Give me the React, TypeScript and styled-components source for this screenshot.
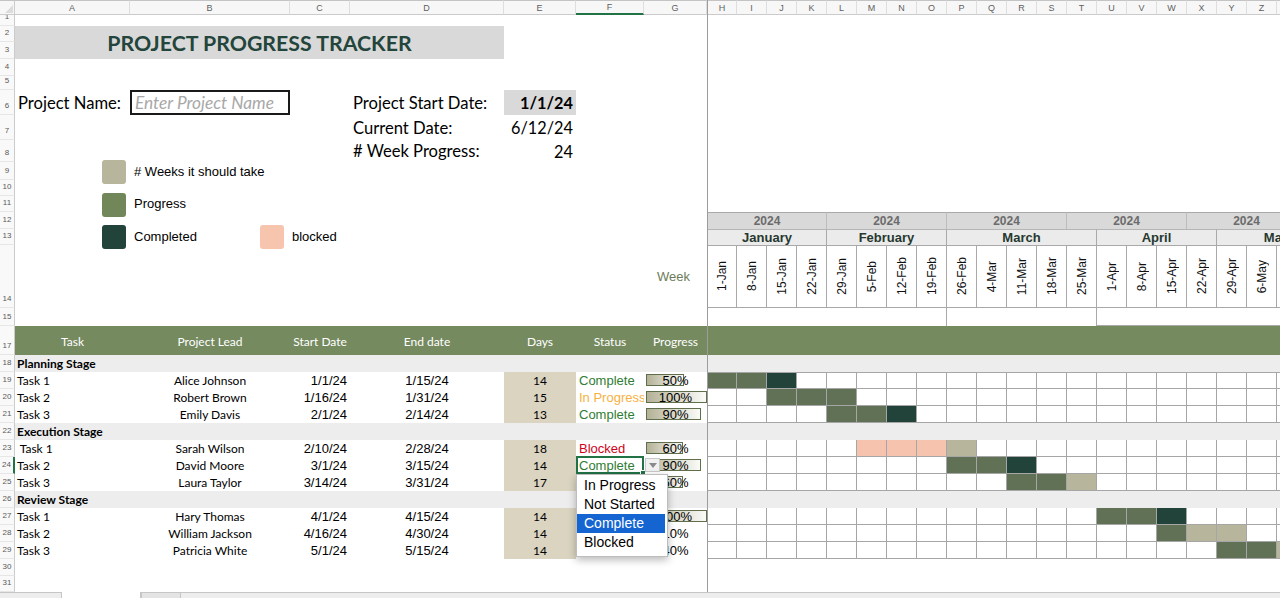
import React from "react";
import styled, { createGlobalStyle, css } from "styled-components";

const GlobalStyle = createGlobalStyle`
  html, body { margin: 0; padding: 0; background: #ffffff; }
  body { width: 1280px; height: 598px; overflow: hidden; }
  #root { width: 1280px; height: 598px; overflow: hidden; }
`;

const CALIBRI = `Lato, Carlito, "Open Sans", sans-serif`;
const ARIAL = `"Liberation Sans", Arial, Helvetica, sans-serif`;

const COL_WIDTHS = [15, 115, 160, 60, 154, 72, 68, 63, 1, 29, ...Array(20).fill(30)];
const ROW_HEIGHTS: number[] = [
  11, 16, 17, 17, 14, 25, 25, 22, 18, 16, 16, 17, 16, 63, 18, 0, 29, 17,
  ...Array(11).fill(17),
  17, 16,
];

const COL = { RH: 1, A: 2, B: 3, C: 4, D: 5, E: 6, F: 7, G: 8, FZ: 9, H: 10 };
const WIDE = COL_WIDTHS.length - 1;

const letters = [
  "A", "B", "C", "D", "E", "F", "G", "",
  "H", "I", "J", "K", "L", "M", "N", "O", "P", "Q", "R", "S", "T", "U", "V", "W", "X", "Y", "Z",
];

const weeks = [
  "1-Jan", "8-Jan", "15-Jan", "22-Jan", "29-Jan", "5-Feb", "12-Feb", "19-Feb", "26-Feb", "4-Mar",
  "11-Mar", "18-Mar", "25-Mar", "1-Apr", "8-Apr", "15-Apr", "22-Apr", "29-Apr", "6-May", "13-May",
];

const years = [
  { c: 10, s: 4 }, { c: 14, s: 4 }, { c: 18, s: 4 }, { c: 22, s: 4 }, { c: 26, s: 4 },
];
const months = [
  { c: 10, s: 4, n: "January" },
  { c: 14, s: 4, n: "February" },
  { c: 18, s: 5, n: "March" },
  { c: 23, s: 4, n: "April" },
  { c: 27, s: 4, n: "May" },
];
const spacers = [
  { c: 10, s: 8, b: false },
  { c: 18, s: 5, b: false },
  { c: 23, s: 8, b: true },
];

type Status = "Complete" | "In Progress" | "Blocked" | "Not Started";
type Fill = "g" | "d" | "p" | "b";

interface Task {
  row: number;
  task: string;
  lead: string;
  start: string;
  end: string;
  days: number;
  status: Status;
  pct: number;
  bar: number;
  gantt: Record<number, Fill>;
}

const stages: { name: string; row: number; tasks: Task[] }[] = [
  {
    name: "Planning Stage",
    row: 18,
    tasks: [
      { row: 19, task: "Task 1", lead: "Alice Johnson", start: "1/1/24", end: "1/15/24", days: 14, status: "Complete", pct: 50, bar: 38, gantt: { 0: "g", 1: "g", 2: "d" } },
      { row: 20, task: "Task 2", lead: "Robert Brown", start: "1/16/24", end: "1/31/24", days: 15, status: "In Progress", pct: 100, bar: 61, gantt: { 2: "g", 3: "g", 4: "g" } },
      { row: 21, task: "Task 3", lead: "Emily Davis", start: "2/1/24", end: "2/14/24", days: 13, status: "Complete", pct: 90, bar: 55, gantt: { 4: "g", 5: "g", 6: "d" } },
    ],
  },
  {
    name: "Execution Stage",
    row: 22,
    tasks: [
      { row: 23, task: " Task 1", lead: "Sarah Wilson", start: "2/10/24", end: "2/28/24", days: 18, status: "Blocked", pct: 60, bar: 37, gantt: { 5: "b", 6: "b", 7: "b", 8: "p" } },
      { row: 24, task: "Task 2", lead: "David Moore", start: "3/1/24", end: "3/15/24", days: 14, status: "Complete", pct: 90, bar: 55, gantt: { 8: "g", 9: "g", 10: "d" } },
      { row: 25, task: "Task 3", lead: "Laura Taylor", start: "3/14/24", end: "3/31/24", days: 17, status: "In Progress", pct: 60, bar: 37, gantt: { 10: "g", 11: "g", 12: "p" } },
    ],
  },
  {
    name: "Review Stage",
    row: 26,
    tasks: [
      { row: 27, task: "Task 1", lead: "Hary Thomas", start: "4/1/24", end: "4/15/24", days: 14, status: "Complete", pct: 100, bar: 61, gantt: { 13: "g", 14: "g", 15: "d" } },
      { row: 28, task: "Task 2", lead: "William Jackson", start: "4/16/24", end: "4/30/24", days: 14, status: "In Progress", pct: 10, bar: 18, gantt: { 15: "g", 16: "p", 17: "p" } },
      { row: 29, task: "Task 3", lead: "Patricia White", start: "5/1/24", end: "5/15/24", days: 14, status: "Not Started", pct: 40, bar: 20, gantt: { 17: "g", 18: "g", 19: "p" } },
    ],
  },
];

const FILL: Record<Fill, string> = {
  g: "#617155",
  d: "#22433a",
  p: "#b7b59b",
  b: "#f6c4ae",
};

const STATUS_COLOR: Record<Status, string> = {
  Complete: "#2f7d33",
  "In Progress": "#f7b13f",
  Blocked: "#d0021b",
  "Not Started": "#000000",
};

const options: Status[] = ["In Progress", "Not Started", "Complete", "Blocked"];

type Pos = { $r: number; $c: number; $rs?: number; $cs?: number };

const place = css<Pos>`
  grid-row: ${(p) => p.$r + 1} / span ${(p) => p.$rs ?? 1};
  grid-column: ${(p) => p.$c} / span ${(p) => p.$cs ?? 1};
  min-width: 0;
  min-height: 0;
  box-sizing: border-box;
`;

const Sheet = styled.div`
  display: grid;
  grid-template-columns: ${COL_WIDTHS.map((w) => `${w}px`).join(" ")};
  grid-template-rows: 15px ${ROW_HEIGHTS.map((h) => `${h}px`).join(" ")} 6px;
  width: max-content;
  background: #ffffff;
`;

const Corner = styled.div<Pos>`
  ${place}
  position: relative;
  background: #f7f7f7;
  border-top: 1px solid #c4c4c4;
  border-bottom: 1px solid #cbcbcb;
  border-right: 1px solid #cbcbcb;
  &::after {
    content: "";
    position: absolute;
    right: 1px;
    bottom: 1px;
    border-left: 8px solid transparent;
    border-bottom: 8px solid #dcdcdc;
  }
`;

const ColHead = styled.div<Pos & { $active?: boolean }>`
  ${place}
  display: flex;
  align-items: center;
  justify-content: center;
  background: #f7f7f7;
  border-top: 1px solid #c4c4c4;
  border-right: 1px solid #dedede;
  border-bottom: ${(p) => (p.$active ? "2px solid #217346" : "1px solid #cbcbcb")};
  font: 9px ${ARIAL};
  color: #5f5f5f;
  overflow: hidden;
`;

const ColHeadFill = styled.div<Pos>`
  ${place}
  background: #f7f7f7;
  border-top: 1px solid #c4c4c4;
  border-bottom: 1px solid #cbcbcb;
`;

const RowHead = styled.div<Pos & { $active?: boolean }>`
  ${place}
  display: flex;
  align-items: flex-end;
  justify-content: center;
  padding-bottom: 3px;
  background: #f9f9f9;
  border-right: ${(p) => (p.$active ? "2px solid #217346" : "1px solid #cbcbcb")};
  border-bottom: 1px solid #e6e6e6;
  font: 8px/10px ${ARIAL};
  color: #5a5a5a;
`;

const TitleBand = styled.div<Pos>`
  ${place}
  display: flex;
  align-items: center;
  justify-content: center;
  background: #d9d9d9;
  font: 700 21.3px ${CALIBRI};
  color: #24453b;
  white-space: nowrap;
`;

const FieldLabel = styled.div<Pos>`
  ${place}
  display: flex;
  align-items: center;
  padding-left: 3px;
  font: 16.6px ${CALIBRI};
  color: #000;
  white-space: nowrap;
`;

const FieldValue = styled.div<Pos & { $bold?: boolean; $shaded?: boolean }>`
  ${place}
  display: flex;
  align-items: center;
  justify-content: flex-end;
  padding-right: 3px;
  background: ${(p) => (p.$shaded ? "#d9d9d9" : "transparent")};
  font: ${(p) => (p.$bold ? 700 : 400)} 16.3px ${CALIBRI};
  color: #000;
`;

const NameInput = styled.div<Pos>`
  ${place}
  display: flex;
  align-items: center;
  padding-left: 3px;
  border: 2px solid #1a1a1a;
  font: italic 17.3px ${CALIBRI};
  color: #a8a8a8;
  white-space: nowrap;
  overflow: hidden;
`;

const Legend = styled.div<Pos>`
  ${place}
  display: grid;
  grid-template-columns: 24px 118px 24px auto;
  grid-template-rows: repeat(3, 24px);
  column-gap: 8px;
  row-gap: 8.5px;
  align-items: center;
  align-content: start;
  padding: 20px 0 0 87px;
`;

const Swatch = styled.div<{ $color: string }>`
  width: 24px;
  height: 24px;
  border-radius: 3px;
  background: ${(p) => p.$color};
`;

const LegendLabel = styled.span`
  font: 13px ${ARIAL};
  color: #000;
  white-space: nowrap;
  position: relative;
  top: -1px;
`;

const WeekCaption = styled.div<Pos>`
  ${place}
  display: flex;
  align-items: center;
  justify-content: flex-end;
  padding-right: 17px;
  font: 13px ${ARIAL};
  color: #6c7c58;
`;

const YearCell = styled.div<Pos>`
  ${place}
  display: flex;
  align-items: center;
  justify-content: center;
  background: #d9d9d9;
  border-top: 1px solid #a9a9a9;
  border-right: 1px solid #bdbdbd;
  font: 700 12px ${ARIAL};
  color: #6b6b6b;
  overflow: hidden;
`;

const MonthCell = styled.div<Pos>`
  ${place}
  display: flex;
  align-items: center;
  justify-content: center;
  background: #ebebeb;
  border-top: 1px solid #b5b5b5;
  border-right: 1px solid #a9a9a9;
  font: 700 13px ${ARIAL};
  color: #26382f;
  white-space: nowrap;
  overflow: hidden;
`;

const WeekCell = styled.div<Pos>`
  ${place}
  display: flex;
  align-items: center;
  justify-content: center;
  border-top: 1px solid #a9a9a9;
  border-right: 1px solid #a9a9a9;
  border-bottom: 1px solid #a9a9a9;
  overflow: hidden;
`;

const WeekText = styled.span`
  writing-mode: vertical-rl;
  transform: rotate(180deg);
  font: 12px ${ARIAL};
  color: #111;
  white-space: nowrap;
`;

const SpacerCell = styled.div<Pos & { $bottom?: boolean }>`
  ${place}
  border-right: 1px solid #a9a9a9;
  border-bottom: ${(p) => (p.$bottom ? "1px solid #a9a9a9" : "none")};
`;

const HeaderBand = styled.div<Pos>`
  ${place}
  background: #758a5f;
`;

const HeaderLabel = styled.div<Pos>`
  ${place}
  display: flex;
  align-items: center;
  justify-content: center;
  padding-top: 2px;
  font: 12px ${CALIBRI};
  color: #ffffff;
  white-space: nowrap;
`;

const StageBand = styled.div<Pos>`
  ${place}
  display: flex;
  align-items: center;
  padding-left: 2px;
  background: #ededed;
  font: 700 12px ${CALIBRI};
  color: #000;
  white-space: nowrap;
`;

const TaskName = styled.div<Pos>`
  ${place}
  display: flex;
  align-items: center;
  padding-left: 2px;
  font: 12px ${CALIBRI};
  color: #000;
  white-space: pre;
`;

const LeadName = styled.div<Pos>`
  ${place}
  display: flex;
  align-items: center;
  justify-content: center;
  font: 12px ${CALIBRI};
  color: #000;
  white-space: nowrap;
`;

const DateCell = styled.div<Pos & { $align: "right" | "center" }>`
  ${place}
  display: flex;
  align-items: center;
  justify-content: ${(p) => (p.$align === "right" ? "flex-end" : "center")};
  padding-right: ${(p) => (p.$align === "right" ? "3px" : "0")};
  font: 13px ${ARIAL};
  color: #000;
`;

const DaysCell = styled.div<Pos>`
  ${place}
  display: flex;
  align-items: center;
  justify-content: center;
  background: #dad4c1;
  font: 12px ${CALIBRI};
  color: #000;
`;

const StatusCell = styled.div<Pos & { $status: Status }>`
  ${place}
  display: flex;
  align-items: center;
  padding-left: 3px;
  font: 13px ${ARIAL};
  color: ${(p) => STATUS_COLOR[p.$status]};
  white-space: nowrap;
  overflow: hidden;
`;

const ProgressCell = styled.div<Pos>`
  ${place}
  display: grid;
  padding-left: 2px;
`;

const Bar = styled.div`
  grid-area: 1 / 1;
  justify-self: start;
  align-self: start;
  margin-top: 2px;
  height: 12px;
  box-sizing: border-box;
  border: 1px solid #5f6f4c;
  background: linear-gradient(to right, #b3b196 0%, #d8d7c8 50%, #fbfbf8 100%);
`;

const Pct = styled.span`
  grid-area: 1 / 1;
  justify-self: center;
  align-self: center;
  font: 13px ${ARIAL};
  color: #000;
  position: relative;
  left: -1px;
`;

const GanttCell = styled.div<Pos & { $fill?: Fill; $top?: boolean }>`
  ${place}
  background: ${(p) => (p.$fill ? FILL[p.$fill] : "#ffffff")};
  border-right: 1px solid #a6a6a6;
  border-bottom: 1px solid #a6a6a6;
  border-top: ${(p) => (p.$top ? "1px solid #a6a6a6" : "none")};
`;

const SelectedCell = styled.div<Pos>`
  ${place}
  position: relative;
  z-index: 10;
  display: flex;
  align-items: center;
  padding-left: 1px;
  margin-top: -1px;
  border: 2px solid #217346;
  font: 13px ${ARIAL};
  color: ${STATUS_COLOR.Complete};
  white-space: nowrap;
`;

const FillHandle = styled.span`
  position: absolute;
  right: -4px;
  bottom: -4px;
  width: 4px;
  height: 4px;
  background: #217346;
  border: 1px solid #ffffff;
`;

const DropButton = styled.span`
  position: absolute;
  left: 67px;
  top: 0;
  width: 15px;
  height: 14px;
  box-sizing: border-box;
  background: #f1f1f1;
  border: 1px solid #c9c9c9;
  display: flex;
  align-items: center;
  justify-content: center;
`;

const DropArrow = styled.span`
  width: 0;
  height: 0;
  border-left: 4px solid transparent;
  border-right: 4px solid transparent;
  border-top: 5px solid #8a8a8a;
`;

const DropList = styled.ul`
  position: absolute;
  left: -2px;
  top: 16px;
  width: 92px;
  box-sizing: border-box;
  margin: 0;
  padding: 1px 0 4px;
  list-style: none;
  background: #ffffff;
  border: 1px solid #bdbdbd;
  box-shadow: 0 3px 8px rgba(0, 0, 0, 0.28);
`;

const DropItem = styled.li<{ $selected?: boolean }>`
  height: 19px;
  margin-right: 2px;
  padding-left: 7px;
  font: 14px/19px ${ARIAL};
  color: ${(p) => (p.$selected ? "#ffffff" : "#000000")};
  background: ${(p) => (p.$selected ? "#1465d2" : "transparent")};
  white-space: nowrap;
`;

const FreezeLine = styled.div<Pos>`
  ${place}
  background: #9c9c9c;
`;

const TabBar = styled.div`
  grid-row: 33;
  grid-column: 1 / -1;
  display: flex;
  background: #ededed;
  border-top: 1px solid #c6c6c6;
  padding-left: 61px;
`;

const SheetTab = styled.div<{ $active?: boolean; $w: number }>`
  width: ${(p) => p.$w}px;
  margin-top: ${(p) => (p.$active ? "-1px" : "0")};
  background: ${(p) => (p.$active ? "#ffffff" : "#e4e4e4")};
  border-left: 1px solid #c6c6c6;
  border-right: 1px solid #c6c6c6;
`;

export default function App() {
  return (
    <>
      <GlobalStyle />
      <Sheet>
        <Corner $r={0} $c={COL.RH} />
        {letters.map((l, i) =>
          l ? (
            <ColHead key={`ch${i}`} $r={0} $c={i + 2} $active={l === "F"}>
              {l}
            </ColHead>
          ) : null
        )}
        <ColHeadFill $r={0} $c={letters.length + 2} $cs={WIDE - letters.length} />
        {ROW_HEIGHTS.map((h, i) =>
          h > 0 ? (
            <RowHead key={`rh${i}`} $r={i + 1} $c={COL.RH} $active={i + 1 === 24}>
              {i + 1}
            </RowHead>
          ) : null
        )}

        <TitleBand $r={2} $c={COL.A} $rs={2} $cs={4}>
          PROJECT PROGRESS TRACKER
        </TitleBand>

        <FieldLabel $r={6} $c={COL.A}>Project Name:</FieldLabel>
        <NameInput $r={6} $c={COL.B}>Enter Project Name</NameInput>
        <FieldLabel $r={6} $c={COL.D}>Project Start Date:</FieldLabel>
        <FieldValue $r={6} $c={COL.E} $bold $shaded>1/1/24</FieldValue>
        <FieldLabel $r={7} $c={COL.D}>Current Date:</FieldLabel>
        <FieldValue $r={7} $c={COL.E}>6/12/24</FieldValue>
        <FieldLabel $r={8} $c={COL.D}># Week Progress:</FieldLabel>
        <FieldValue $r={8} $c={COL.E}>24</FieldValue>

        <Legend $r={8} $c={COL.A} $rs={6} $cs={3}>
          <Swatch $color="#b7b59b" />
          <LegendLabel># Weeks it should take</LegendLabel>
          <span />
          <span />
          <Swatch $color="#718659" />
          <LegendLabel>Progress</LegendLabel>
          <span />
          <span />
          <Swatch $color="#22433a" />
          <LegendLabel>Completed</LegendLabel>
          <Swatch $color="#f7c5ae" />
          <LegendLabel>blocked</LegendLabel>
        </Legend>

        {years.map((y, i) => (
          <YearCell key={`y${i}`} $r={12} $c={y.c} $cs={y.s}>2024</YearCell>
        ))}
        {months.map((m) => (
          <MonthCell key={m.n} $r={13} $c={m.c} $cs={m.s}>{m.n}</MonthCell>
        ))}
        <WeekCaption $r={14} $c={COL.G}>Week</WeekCaption>
        {weeks.map((w, i) => (
          <WeekCell key={w} $r={14} $c={COL.H + i}>
            <WeekText>{i < 19 ? w : ""}</WeekText>
          </WeekCell>
        ))}
        {spacers.map((s, i) => (
          <SpacerCell key={`sp${i}`} $r={15} $c={s.c} $cs={s.s} $bottom={s.b} />
        ))}

        <HeaderBand $r={17} $c={COL.A} $cs={WIDE} />
        <HeaderLabel $r={17} $c={COL.A}>Task</HeaderLabel>
        <HeaderLabel $r={17} $c={COL.B}>Project Lead</HeaderLabel>
        <HeaderLabel $r={17} $c={COL.C}>Start Date</HeaderLabel>
        <HeaderLabel $r={17} $c={COL.D}>End date</HeaderLabel>
        <HeaderLabel $r={17} $c={COL.E}>Days</HeaderLabel>
        <HeaderLabel $r={17} $c={COL.F}>Status</HeaderLabel>
        <HeaderLabel $r={17} $c={COL.G}>Progress</HeaderLabel>

        {stages.map((st) => (
          <React.Fragment key={st.name}>
            <StageBand $r={st.row} $c={COL.A} $cs={WIDE}>{st.name}</StageBand>
            {st.tasks.map((t) => (
              <React.Fragment key={t.row}>
                <TaskName $r={t.row} $c={COL.A}>{t.task}</TaskName>
                <LeadName $r={t.row} $c={COL.B}>{t.lead}</LeadName>
                <DateCell $r={t.row} $c={COL.C} $align="right">{t.start}</DateCell>
                <DateCell $r={t.row} $c={COL.D} $align="center">{t.end}</DateCell>
                <DaysCell $r={t.row} $c={COL.E}>{t.days}</DaysCell>
                {t.row === 24 ? null : (
                  <StatusCell $r={t.row} $c={COL.F} $status={t.status}>{t.status}</StatusCell>
                )}
                <ProgressCell $r={t.row} $c={COL.G}>
                  <Bar style={{ width: `${t.bar}px` }} />
                  <Pct>{t.pct}%</Pct>
                </ProgressCell>
                {weeks.map((_, i) => (
                  <GanttCell
                    key={`g${t.row}-${i}`}
                    $r={t.row}
                    $c={COL.H + i}
                    $fill={t.gantt[i]}
                    $top={t.row === 19}
                  />
                ))}
              </React.Fragment>
            ))}
          </React.Fragment>
        ))}

        <FreezeLine $r={0} $c={COL.FZ} $rs={33} />

        <SelectedCell $r={24} $c={COL.F}>
          Complete
          <FillHandle />
          <DropButton>
            <DropArrow />
          </DropButton>
          <DropList>
            {options.map((o) => (
              <DropItem key={o} $selected={o === "Complete"}>{o}</DropItem>
            ))}
          </DropList>
        </SelectedCell>

        <TabBar>
          <SheetTab $w={78} $active />
          <SheetTab $w={38} />
        </TabBar>
      </Sheet>
    </>
  );
}
